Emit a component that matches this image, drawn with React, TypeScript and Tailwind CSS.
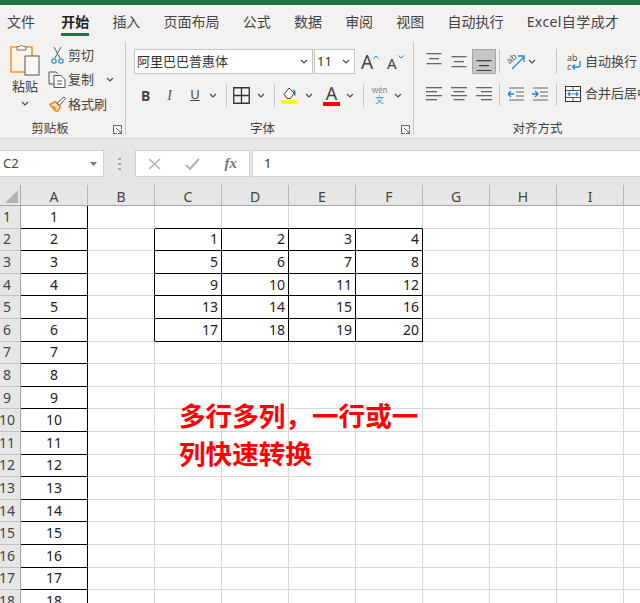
import type { ReactNode } from "react";

const TABS = ["文件", "开始", "插入", "页面布局", "公式", "数据", "审阅", "视图", "自动执行", "Excel自学成才"];
// the tenth column runs off the right edge, its letter is never visible
const COLS = ["A", "B", "C", "D", "E", "F", "G", "H", "I", ""];
const ROW_COUNT = 18;

function Chevron({ className = "" }: { className?: string }) {
  return (
    <svg width="8" height="5" viewBox="0 0 8 5" className={`shrink-0 ${className}`}>
      <path d="M1 1l3 3 3-3" fill="none" stroke="#444" strokeWidth="1.1" />
    </svg>
  );
}

function Sep({ className = "" }: { className?: string }) {
  return <div className={`w-px h-[23px] bg-[#c8c6c4] shrink-0 ${className}`} />;
}

function Divider() {
  return <div className="w-px h-[93px] mt-[3px] bg-[#c8c6c4] shrink-0" />;
}

function Launcher() {
  return (
    <svg width="9" height="9" viewBox="0 0 9 9" className="shrink-0">
      <path d="M.5 4V.5H8.500V4M.5.5V8.500H4M3 3l5 5M8.500 5v3.500H5" fill="none" stroke="#666" strokeWidth="1" />
    </svg>
  );
}

function Lines({ widths, y, aligned = "left", color = "#666" }: { widths: number[]; y: number[]; aligned?: "left" | "center" | "right"; color?: string }) {
  return (
    <svg width="16" height="18" viewBox="0 0 16 18" className="shrink-0">
      {widths.map((w, i) => {
        const x = aligned === "left" ? 0 : aligned === "right" ? 16 - w : (16 - w) / 2;
        return <rect key={i} x={x} y={y[i] - 1} width={w} height="1.300" fill={color} />;
      })}
    </svg>
  );
}

function IndentIcon({ dir }: { dir: "in" | "out" }) {
  return (
    <svg width="16" height="16" viewBox="0 0 16 16" className="shrink-0">
      <path d="M1 2h15M8 6h8M8 10h8M1 14h15" stroke="#666" strokeWidth="1.200" />
      {dir === "out" ? (
        <path d="M0 8h6M3 5L0 8l3 3" fill="none" stroke="#1e88d6" strokeWidth="1.400" />
      ) : (
        <path d="M0 8h6M3 5l3 3-3 3" fill="none" stroke="#1e88d6" strokeWidth="1.400" />
      )}
    </svg>
  );
}

function PasteIcon() {
  return (
    <svg width="30" height="33" viewBox="0 0 30 33" className="shrink-0">
      <rect x="1" y="4" width="21" height="25" fill="#fdf3e4" stroke="#ee9a3a" strokeWidth="1.600" />
      <path d="M7 7V3.500h2.500a2.500 2.500 0 0 1 4 0H16V7z" fill="#f3f2f1" stroke="#777" strokeWidth="1" />
      <rect x="15" y="13" width="14" height="19" fill="#f8f8f8" stroke="#555" strokeWidth="1" />
    </svg>
  );
}

function CutIcon() {
  return (
    <svg width="13" height="17" viewBox="0 0 13 17" className="shrink-0">
      <path d="M3 0l6 11M10 0L4 11" stroke="#555" strokeWidth="1" fill="none" />
      <circle cx="3" cy="14" r="2.200" fill="none" stroke="#2a8ad4" strokeWidth="1.200" />
      <circle cx="10" cy="14" r="2.200" fill="none" stroke="#2a8ad4" strokeWidth="1.200" />
    </svg>
  );
}

function CopyIcon() {
  return (
    <svg width="18" height="17" viewBox="0 0 18 17" className="shrink-0">
      <path d="M6 13H1V1h7l2 2" fill="none" stroke="#555" strokeWidth="1" />
      <path d="M6 4.500h7l4 4v8H6z" fill="#fff" stroke="#555" strokeWidth="1" />
      <path d="M9 10h5M9 13h5" stroke="#555" strokeWidth="1" />
    </svg>
  );
}

function BrushIcon() {
  return (
    <svg width="17" height="16" viewBox="0 0 17 16" className="shrink-0">
      <path d="M1 8.500l5-3 5.500 5.500-3 4.500C6 15 3 11.500 1 8.500zM4 10l3 3" fill="#fbe3c2" stroke="#ee8f25" strokeWidth="1.500" />
      <path d="M8 7l7-6 1.500 1.500-6 7z" fill="#fff" stroke="#555" strokeWidth="1" />
    </svg>
  );
}

function BorderIcon() {
  return (
    <svg width="17" height="17" viewBox="0 0 17 17" className="shrink-0">
      <path d="M.75.75h15.500v15.500H.75zM8.500 1v15M1 8.500h15" fill="none" stroke="#333" strokeWidth="1.300" />
    </svg>
  );
}

function FillIcon() {
  return (
    <svg width="17" height="18" viewBox="0 0 17 18" className="shrink-0">
      <path d="M3 8.500L8 2l5 5-3.500 5.500H6z" fill="#fff" stroke="#444" strokeWidth="1" />
      <path d="M11 3l3.500 2v4.500H13V6z" fill="#2a6fb0" />
      <rect x="0" y="14" width="17" height="4" fill="#ffff00" />
    </svg>
  );
}

function OrientationIcon() {
  return (
    <svg width="18" height="17" viewBox="0 0 18 17" className="shrink-0">
      <text x="1" y="9" fontSize="9" fill="#555" transform="rotate(-40 5 8)" fontFamily="'Liberation Sans', sans-serif">ab</text>
      <path d="M5 16L17 4M11 3h6v6" fill="none" stroke="#1e88d6" strokeWidth="1.300" />
    </svg>
  );
}

function WrapIcon() {
  return (
    <div className="relative w-[14px] h-[18px] shrink-0">
      <span className="absolute left-0 top-0 text-[9px] leading-[9px] text-[#555]">ab</span>
      <span className="absolute left-0 top-[9px] text-[9px] leading-[9px] text-[#555]">c</span>
      <svg width="14" height="18" viewBox="0 0 14 18" className="absolute left-0 top-0">
        <path d="M13 8v4a2 2 0 0 1-2 2H6M8 11.500L5.500 14 8 16.500" fill="none" stroke="#1e88d6" strokeWidth="1.300" />
      </svg>
    </div>
  );
}

function MergeIcon() {
  return (
    <svg width="16" height="16" viewBox="0 0 16 16" className="shrink-0">
      <rect x=".5" y=".5" width="15" height="15" fill="#fff" stroke="#333" />
      <path d="M1 4.500h14M1 11.500h14M8 1v3M8 12v3" stroke="#555" strokeWidth="1" />
      <path d="M3 8h10M5 6L3 8l2 2M11 6l2 2-2 2" fill="none" stroke="#1e88d6" strokeWidth="1.100" />
    </svg>
  );
}

function SmallRow({ icon, label, chevron }: { icon: ReactNode; label: string; chevron?: boolean }) {
  return (
    <div className="flex items-center h-[24.500px]">
      <div className="w-[18px] flex justify-center">{icon}</div>
      <span className="ml-[2px] text-[13px] text-[#444]">{label}</span>
      {chevron && <Chevron className="ml-[12px]" />}
    </div>
  );
}

function GroupLabel({ label, offset, launcher }: { label: string; offset: string; launcher?: boolean }) {
  return (
    <div className="mt-auto h-[20px] flex items-center relative pt-[3px]">
      <span className={`flex-1 text-center text-[12.500px] text-[#444] ${offset}`}>{label}</span>
      {launcher && (
        <div className="absolute right-[3px] top-[7px]">
          <Launcher />
        </div>
      )}
    </div>
  );
}

function Clipboard() {
  return (
    <section className="w-[125px] h-full flex flex-col shrink-0">
      <div className="flex pt-[4px]">
        <div className="w-[48px] flex flex-col items-center pl-[2px]">
          <PasteIcon />
          <span className="text-[13px] leading-[18px] mt-[1px] text-[#444]">粘贴</span>
          <Chevron className="mt-[6px]" />
        </div>
        <div className="flex flex-col">
          <SmallRow icon={<CutIcon />} label="剪切" />
          <SmallRow icon={<CopyIcon />} label="复制" chevron />
          <SmallRow icon={<BrushIcon />} label="格式刷" />
        </div>
      </div>
      <GroupLabel label="剪贴板" offset="pr-[25px]" launcher />
    </section>
  );
}

function FontGroup() {
  return (
    <section className="w-[287px] h-full flex flex-col shrink-0">
      <div className="flex items-center pl-[8px] pt-[10px]">
        <div className="w-[179px] h-[25px] bg-white border border-[#c8c6c4] flex items-center pl-[2px] pr-[4px]">
          <span className="flex-1 text-[13px] text-[#333] whitespace-nowrap">阿里巴巴普惠体</span>
          <Chevron />
        </div>
        <div className="w-[41px] h-[25px] ml-[1px] bg-white border border-[#c8c6c4] flex items-center pl-[2px] pr-[4px]">
          <span className="flex-1 text-[13px] text-[#333]">11</span>
          <Chevron />
        </div>
        <div className="ml-[6px] w-[18px] h-[22px] relative text-[#444]">
          <span className="text-[19px] leading-[22px]">A</span>
          <svg width="6" height="4" viewBox="0 0 6 4" className="absolute right-0 top-[4px]">
            <path d="M.5 3.500L3 1l2.500 2.500" fill="none" stroke="#1e88d6" strokeWidth="1" />
          </svg>
        </div>
        <div className="ml-[8px] w-[17px] h-[22px] relative text-[#444]">
          <span className="text-[15px] leading-[22px]">A</span>
          <svg width="6" height="4" viewBox="0 0 6 4" className="absolute right-0 top-[4px]">
            <path d="M.5.500L3 3 5.500.500" fill="none" stroke="#1e88d6" strokeWidth="1" />
          </svg>
        </div>
      </div>
      <div className="flex items-center h-[24px] mt-[9px] pl-[15px]">
        <span className="w-[9px] text-[14px] font-bold text-[#444] text-center">B</span>
        <span className="ml-[15px] w-[9px] text-[14px] italic text-[#555] text-center font-['Liberation_Serif',serif]">I</span>
        <span className="ml-[16px] w-[10px] text-[13px] underline text-[#444] text-center">U</span>
        <Chevron className="ml-[9px]" />
        <Sep className="ml-[9px]" />
        <div className="ml-[6px]"><BorderIcon /></div>
        <Chevron className="ml-[7px]" />
        <Sep className="ml-[9px]" />
        <div className="ml-[6px]"><FillIcon /></div>
        <Chevron className="ml-[7px]" />
        <div className="ml-[10px] w-[17px] h-[22px] flex flex-col items-center">
          <span className="text-[18px] leading-[18px] text-[#444]">A</span>
          <div className="w-[17px] h-[4px] bg-[#ff0000]" />
        </div>
        <Chevron className="ml-[6px]" />
        <Sep className="ml-[9px]" />
        <div className="ml-[7px] w-[17px] flex flex-col items-center">
          <span className="text-[8px] leading-[9px] text-[#888]">wén</span>
          <span className="text-[9px] leading-[11px] text-[#3a96dd]">文</span>
        </div>
        <Chevron className="ml-[6px]" />
      </div>
      <GroupLabel label="字体" offset="pr-[14px]" launcher />
    </section>
  );
}

function AlignGroup() {
  return (
    <section className="flex-1 h-full flex flex-col min-w-0 overflow-hidden">
      <div className="flex items-center pt-[10px] pl-[12px] h-[35px]">
        <Lines widths={[15, 10, 15]} aligned="center" y={[1, 6, 11]} />
        <div className="ml-[9px]"><Lines widths={[15, 10, 15]} aligned="center" y={[4, 9, 14]} /></div>
        <div className="ml-[5px] w-[24px] h-[25px] bg-[#c8c6c4] border border-[#a6a6a6] flex items-center justify-center shrink-0">
          <Lines widths={[15, 10, 15]} aligned="center" y={[8, 13, 18]} color="#444" />
        </div>
        <Sep className="ml-[3px]" />
        <div className="ml-[7px]"><OrientationIcon /></div>
        <Chevron className="ml-[3px]" />
        <Sep className="ml-[20px] h-[25px]" />
        <div className="ml-[10px]"><WrapIcon /></div>
        <span className="ml-[4px] text-[13px] text-[#444] whitespace-nowrap">自动换行</span>
      </div>
      <div className="flex items-center h-[24px] mt-[8px] pl-[12px]">
        <Lines widths={[16, 11, 16, 11]} y={[3, 7, 11, 15]} />
        <div className="ml-[9px]"><Lines widths={[16, 11, 16, 11]} aligned="center" y={[3, 7, 11, 15]} /></div>
        <div className="ml-[9px]"><Lines widths={[16, 11, 16, 11]} aligned="right" y={[3, 7, 11, 15]} /></div>
        <Sep className="ml-[7px]" />
        <div className="ml-[8px]"><IndentIcon dir="out" /></div>
        <div className="ml-[8px]"><IndentIcon dir="in" /></div>
        <Sep className="ml-[8px]" />
        <div className="ml-[8px]"><MergeIcon /></div>
        <span className="ml-[4px] text-[13px] text-[#444] whitespace-nowrap">合并后居中</span>
      </div>
      <div className="mt-auto h-[20px] w-[247px] flex items-center justify-center pt-[3px]">
        <span className="text-[12.500px] text-[#444]">对齐方式</span>
      </div>
    </section>
  );
}

function FormulaBar() {
  return (
    <div className="h-[46px] bg-[#e6e6e6] flex items-center pt-[3px] shrink-0">
      <div className="w-[104px] h-[27px] bg-white border border-[#d0d0d0] border-l-0 flex items-center pl-[3px] pr-[6px]">
        <span className="flex-1 text-[13px] text-[#444]">C2</span>
        <svg width="7" height="4" viewBox="0 0 7 4"><path d="M0 0h7L3.500 4z" fill="#777" /></svg>
      </div>
      <div className="w-[31px] flex justify-center">
        <svg width="3" height="12" viewBox="0 0 3 12">
          <path d="M0 0h3v2H0zM0 5h3v2H0zM0 10h3v2H0z" fill="#a6a6a6" />
        </svg>
      </div>
      <div className="w-[115px] h-[27px] bg-white border border-[#d0d0d0] flex items-center justify-between pl-[12px] pr-[12px]">
        <svg width="13" height="12" viewBox="0 0 13 12"><path d="M1 1l11 10M12 1L1 11" stroke="#b3b3b3" strokeWidth="1.500" /></svg>
        <svg width="15" height="12" viewBox="0 0 15 12"><path d="M1 7l4 4 9-10" fill="none" stroke="#b3b3b3" strokeWidth="2" /></svg>
        <span className="text-[15px] italic text-[#777] font-['Liberation_Serif',serif] leading-none font-bold">fx</span>
      </div>
      <div className="ml-[2px] flex-1 h-[27px] bg-white border border-[#d0d0d0] border-r-0 flex items-center pl-[11px]">
        <span className="text-[13px] text-[#333]">1</span>
      </div>
    </div>
  );
}

function Sheet() {
  const rows = Array.from({ length: ROW_COUNT }, (_, i) => i + 1);
  return (
    <div className="flex-1 min-h-0 overflow-hidden bg-white grid grid-cols-[21px_repeat(10,67px)] grid-rows-[21px_repeat(18,22.6px)] text-[14px] text-[#222] leading-none">
      <div className="bg-[#e6e6e6] border-b border-r border-[#a6a6a6] relative overflow-hidden">
        <div className="absolute right-[2px] bottom-[2px] w-0 h-0 border-l-[13px] border-l-transparent border-b-[13px] border-b-[#b4b4b4]" />
      </div>
      {COLS.map((c, i) => (
        <div key={i} className="bg-[#e6e6e6] border-b border-r border-b-[#a6a6a6] border-r-[#b8b8b8] flex items-center justify-center pt-[3px] text-[#444]">
          {c}
        </div>
      ))}
      {rows.map((r) => (
        <Row key={r} r={r} />
      ))}
    </div>
  );
}

function Row({ r }: { r: number }) {
  return (
    <>
      <div className="bg-[#e6e6e6] border-r border-b border-r-[#a6a6a6] border-b-[#c4c4c4] flex items-center justify-center pr-[6px] text-[#444] whitespace-nowrap">
        {r}
      </div>
      {COLS.map((_, c) => (
        <Cell key={c} r={r} c={c} />
      ))}
    </>
  );
}

function Cell({ r, c }: { r: number; c: number }) {
  if (c === 0) {
    return (
      <div className="border-r border-b border-black flex items-center justify-center">{r}</div>
    );
  }
  const inTable = c >= 2 && c <= 5 && r >= 2 && r <= 6;
  if (inTable) {
    const value = (r - 2) * 4 + (c - 1);
    return (
      <div className="border-r border-b border-black flex items-center justify-end pr-[3px]">{value}</div>
    );
  }
  // the cells just above and left of the table hand their edge to it
  const blackBottom = r === 1 && c >= 2 && c <= 5;
  const blackRight = c === 1 && r >= 2 && r <= 6;
  return (
    <div
      className={`border-r border-b ${blackRight ? "border-r-black" : "border-r-[#d8d8d8]"} ${blackBottom ? "border-b-black" : "border-b-[#d8d8d8]"}`}
    />
  );
}

export default function App() {
  return (
    <div className="relative w-[640px] h-[603px] overflow-hidden flex flex-col bg-white font-['Noto_Sans','Noto_Sans_CJK_SC',sans-serif]">
      <div className="h-[5px] bg-[#217346] shrink-0" />
      <nav className="h-[34px] bg-[#f3f2f1] flex items-start pl-[7px] pt-[4px] gap-[23.200px] shrink-0">
        {TABS.map((t, i) => (
          <div key={t} className={`relative whitespace-nowrap ${i === 1 ? "ml-[3px]" : ""} ${i === 9 ? "tracking-[0.4px]" : ""}`}>
            <span className={`text-[14px] leading-[22px] ${t === "开始" ? "font-bold text-[#222]" : "text-[#444]"}`}>{t}</span>
            {t === "开始" && <div className="absolute left-0 right-0 top-[24px] h-[3px] bg-[#217346]" />}
          </div>
        ))}
      </nav>
      <div className="h-[100px] bg-[#f3f2f1] flex border-b border-[#d8d6d4] shrink-0">
        <Clipboard />
        <Divider />
        <FontGroup />
        <Divider />
        <AlignGroup />
      </div>
      <FormulaBar />
      <Sheet />
      <div className="absolute left-[179px] top-[396px] w-[260px] text-[26.600px] leading-[38px] font-bold text-[#ff0000] font-['Noto_Sans_CJK_SC','Noto_Sans',sans-serif]">
        多行多列，一行或一
        <br />
        列快速转换
      </div>
    </div>
  );
}
